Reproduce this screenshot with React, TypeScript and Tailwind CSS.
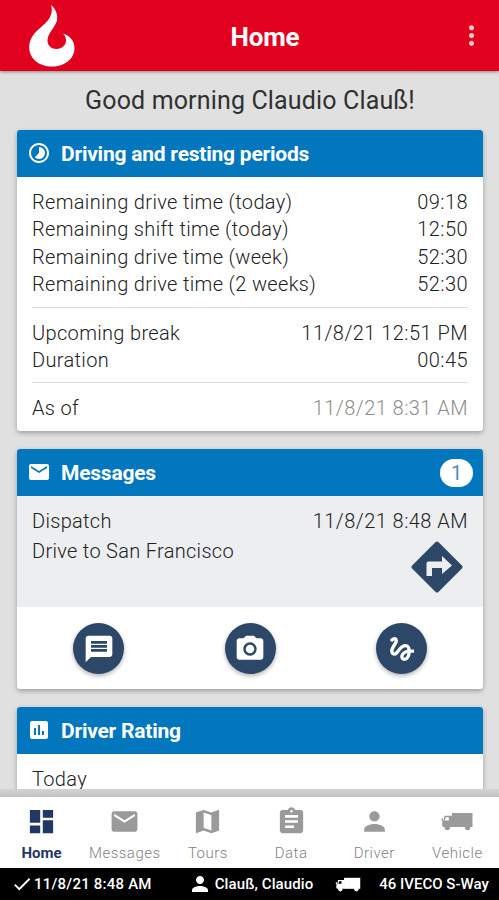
import type { ReactNode } from "react";
import type { IconType } from "react-icons";
import {
  MdAssessment,
  MdAssignment,
  MdCheck,
  MdDashboard,
  MdEmail,
  MdGesture,
  MdMap,
  MdMessage,
  MdMoreVert,
  MdPerson,
  MdPhotoCamera,
  MdTimelapse,
} from "react-icons/md";

const driveTimes = [
  { label: "Remaining drive time (today)", value: "09:18" },
  { label: "Remaining shift time (today)", value: "12:50" },
  { label: "Remaining drive time (week)", value: "52:30" },
  { label: "Remaining drive time (2 weeks)", value: "52:30" },
];

const breakTimes = [
  { label: "Upcoming break", value: "11/8/21 12:51 PM" },
  { label: "Duration", value: "00:45" },
];

const tabs = [
  { label: "Home", icon: <MdDashboard className="size-[31px]" />, active: true },
  { label: "Messages", icon: <MdEmail className="size-[31px]" /> },
  { label: "Tours", icon: <MdMap className="size-[31px]" /> },
  { label: "Data", icon: <MdAssignment className="size-[31px]" /> },
  { label: "Driver", icon: <MdPerson className="size-[31px]" /> },
  { label: "Vehicle", icon: <TruckIcon className="h-[19px] w-[32px]" /> },
];

function FlameLogo() {
  return (
    <svg viewBox="0 0 46 62" className="h-[62px] w-[46px]" fill="#fff">
      <path d="M22.2 0C26.5 4 29 9 28 15C27 22 18.5 28 18.5 35.5C18.5 40.5 22.5 44 27.5 44C33 44 37 40 37 35.5C37 32.5 36 30.5 34 28.5C41 30.5 45.5 36.5 45.5 43C45.5 54 35.5 61.5 23 61.5C10 61.5 0.2 53.5 0.2 42.5C0.2 34 5 28 11 23C18 17 25 11 22.2 0Z" />
    </svg>
  );
}

function TruckIcon({ className }: { className?: string }) {
  return (
    <svg viewBox="0 0 32 19" className={className} fill="currentColor">
      <path d="M11 1H31.5V15H11Z" />
      <path
        fillRule="evenodd"
        d="M3.4 3.8H11.5V15H2.4L1.2 14V9.5L2.6 8.5ZM4.6 5.3L3.9 8.6H7.8V5.3Z"
      />
      <path d="M0.6 6.5H2V8.8H0.6Z" />
      <circle cx="6.3" cy="15.6" r="2.7" />
      <circle cx="26.6" cy="15.6" r="2.7" />
    </svg>
  );
}

function TurnSign() {
  return (
    <svg viewBox="0 0 52 52" className="size-[52px]">
      <path
        d="M24.6 1.1a2 2 0 0 1 2.8 0L50.9 24.6a2 2 0 0 1 0 2.8L27.4 50.9a2 2 0 0 1-2.8 0L1.1 27.4a2 2 0 0 1 0-2.8Z"
        fill="#2c4767"
      />
      <path d="M15.5 35V22.5A2 2 0 0 1 17.5 20.5H31V15L41 24.5L31 33V27H21V35Z" fill="#eceef0" />
    </svg>
  );
}

function Card({
  title,
  icon: Icon,
  badge,
  className,
  children,
}: {
  title: string;
  icon: IconType;
  badge?: number;
  className: string;
  children: ReactNode;
}) {
  return (
    <section
      className={`shrink-0 overflow-hidden rounded-[3px] bg-white shadow-[0_2px_5px_rgba(0,0,0,0.3)] ${className}`}
    >
      <header className="flex h-[47px] items-center bg-[#0277bd] px-[10px] text-white">
        <Icon className="mr-[10px] mb-px size-[24px]" />
        <h2 className="flex-1 pt-[3px] text-[21px] font-bold tracking-[-0.23px]">{title}</h2>
        {badge && (
          <span className="flex h-[28px] w-[33px] items-center justify-center rounded-full bg-white text-[20px] text-[#4a8fc9]">
            {badge}
          </span>
        )}
      </header>
      {children}
    </section>
  );
}

function Row({ label, value, muted }: { label: string; value: string; muted?: boolean }) {
  return (
    <div className="flex justify-between leading-[27.4px]">
      <span>{label}</span>
      <span className={`tracking-[0.46px] ${muted ? "text-[#8c8c8c]" : ""}`}>{value}</span>
    </div>
  );
}

function RoundButton({ icon: Icon }: { icon: IconType }) {
  return (
    <button className="flex size-[51px] items-center justify-center rounded-full bg-[#2c4767] text-white shadow-[0_2px_4px_rgba(0,0,0,0.3)]">
      <Icon className="size-[32px]" />
    </button>
  );
}

export default function App() {
  return (
    <div className="flex h-[900px] w-[499px] flex-col overflow-hidden bg-[#e0e0e0] font-[Roboto,sans-serif] text-[#222]">
      <header className="z-10 flex h-[71px] shrink-0 items-center justify-between bg-[#e2001f] pr-[12px] pl-[29px] text-white shadow-[0_1px_3px_rgba(0,0,0,0.4)]">
        <div className="w-[60px]">
          <FlameLogo />
        </div>
        <h1 className="pt-[4px] pl-[14px] text-[26px] font-bold tracking-[-0.2px]">Home</h1>
        <div className="flex w-[60px] justify-end">
          <MdMoreVert className="size-[31px] text-[#ffc8cc]" />
        </div>
      </header>

      <main className="flex h-[718px] shrink-0 flex-col overflow-hidden pr-[16px] pl-[17px]">
        <p className="h-[59px] shrink-0 text-center text-[25px] leading-[60px] tracking-[0.15px] text-[#303030]">
          Good morning Claudio Clauß!
        </p>

        <Card title="Driving and resting periods" icon={MdTimelapse} className="h-[301px]">
          <div className="px-[15px] pt-[12px] text-[20px] font-light tracking-[0.34px]">
            {driveTimes.map((row) => (
              <Row key={row.label} {...row} />
            ))}
            <hr className="mt-[8px] mb-[12px] border-[#dcdcdc]" />
            {breakTimes.map((row) => (
              <Row key={row.label} {...row} />
            ))}
            <hr className="mt-[8px] mb-[12px] border-[#dcdcdc]" />
            <Row label="As of" value="11/8/21 8:31 AM" muted />
          </div>
        </Card>

        <Card title="Messages" icon={MdEmail} badge={1} className="mt-[18px] h-[240px]">
          <div className="h-[111px] bg-[#eceef0] px-[15px] pt-[12px] text-[20px] font-light tracking-[0.3px]">
            <Row label="Dispatch" value="11/8/21 8:48 AM" />
            <div className="flex justify-between pr-[5px]">
              <span className="pt-[3px] leading-[27.3px]">Drive to San Francisco</span>
              <div className="pt-[6px]">
                <TurnSign />
              </div>
            </div>
          </div>
          <div className="flex justify-between px-[56px] pt-[16px]">
            <RoundButton icon={MdMessage} />
            <RoundButton icon={MdPhotoCamera} />
            <RoundButton icon={MdGesture} />
          </div>
        </Card>

        <Card title="Driver Rating" icon={MdAssessment} className="mt-[18px] h-[120px]">
          <div className="px-[15px] pt-[12px] text-[20px] leading-[27.3px] font-light tracking-[0.34px]">
            Today
          </div>
        </Card>
      </main>

      <div className="h-[8px] shrink-0 bg-gradient-to-b from-[#d4d4d4] to-[#c2c2c2]" />
      <nav className="grid h-[71px] shrink-0 grid-cols-6 bg-white">
        {tabs.map((tab) => (
          <div
            key={tab.label}
            className={`flex flex-col items-center pt-[9px] text-[15px] ${
              tab.active ? "font-bold text-[#1f3864]" : "font-light tracking-[0.5px] text-[#9a9a9a]"
            }`}
          >
            <div className="flex h-[31px] items-center">{tab.icon}</div>
            <span className={tab.active ? "mt-[5px]" : "mt-[5px] text-[#828282]"}>{tab.label}</span>
          </div>
        ))}
      </nav>

      <footer className="flex h-[32px] shrink-0 items-center bg-black text-[15px] font-medium text-white">
        <MdCheck className="ml-[11px] size-[22px]" />
        <span className="ml-px tracking-[0.22px]">11/8/21 8:48 AM</span>
        <MdPerson className="ml-[36px] size-[24px]" />
        <span className="ml-[3px] tracking-[0.1px]">Clauß, Claudio</span>
        <TruckIcon className="ml-[22px] h-[15px] w-[26px]" />
        <span className="ml-[18px]">46 IVECO S-Way</span>
      </footer>
    </div>
  );
}
